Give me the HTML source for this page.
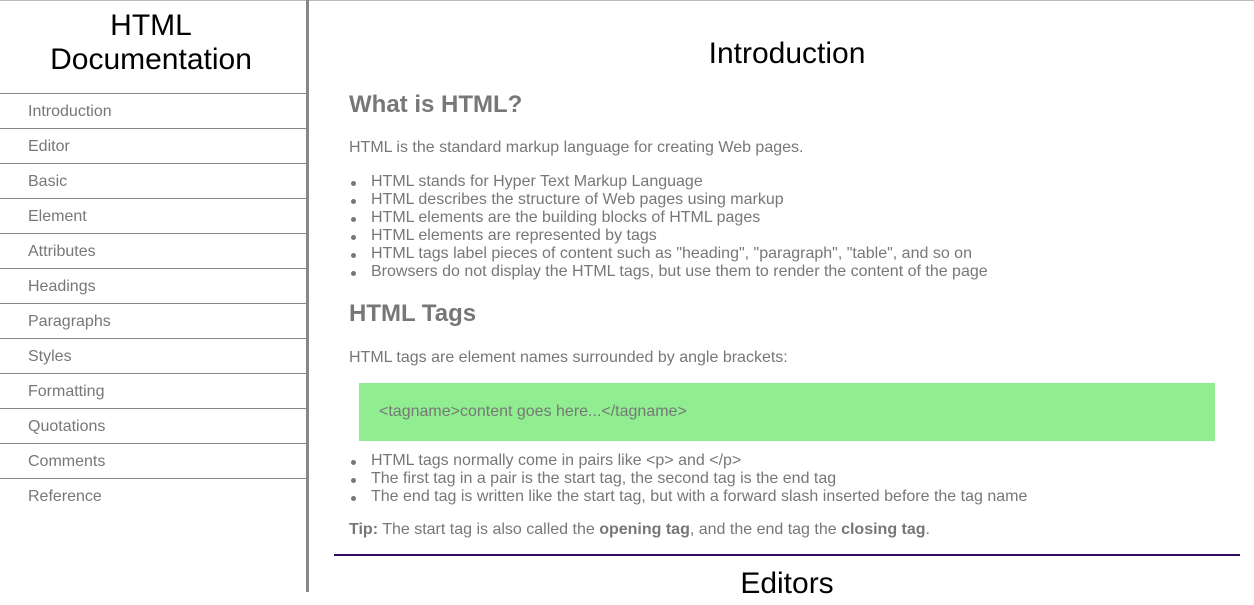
<!DOCTYPE html>
<html><head><style>
body{margin:0;width:1254px;height:605px;overflow:hidden;background:#fff;font-family:"Liberation Sans",Arial,sans-serif;position:relative}
.a{position:absolute;white-space:nowrap}
#top{position:absolute;left:0;top:0;width:1254px;height:1px;background:#bbb}
#side{position:absolute;left:0;top:0;width:306px;height:592px;border-right:3px solid #888}
#side h1{position:absolute;top:9px;left:0;width:302px;margin:0;text-align:center;font-weight:normal;font-size:30px;line-height:34px;color:#000}
.nav{position:absolute;left:0;width:306px;height:34px;border-top:1px solid #888;color:#777;font-size:16px;line-height:35px;padding-left:28px;box-sizing:border-box}
.g{color:#777;font-size:16px}
ul{margin:0;padding:0;list-style:none}
li{position:relative;padding-left:22px;line-height:18px}
li:before{content:"";position:absolute;left:2px;top:8px;width:5px;height:5px;border-radius:50%;background:#777}
</style></head><body>
<div id="top"></div>
<div id="side">
<h1>HTML<br>Documentation</h1>
<div class="nav" style="top:93px">Introduction</div>
<div class="nav" style="top:128px">Editor</div>
<div class="nav" style="top:163px">Basic</div>
<div class="nav" style="top:198px">Element</div>
<div class="nav" style="top:233px">Attributes</div>
<div class="nav" style="top:268px">Headings</div>
<div class="nav" style="top:303px">Paragraphs</div>
<div class="nav" style="top:338px">Styles</div>
<div class="nav" style="top:373px">Formatting</div>
<div class="nav" style="top:408px">Quotations</div>
<div class="nav" style="top:443px">Comments</div>
<div class="nav" style="top:478px">Reference</div>
</div>
<div class="a" style="left:334px;width:906px;top:37px;text-align:center;font-size:30px;color:#000">Introduction</div>
<div class="a" style="left:349px;top:91px;font-size:24px;font-weight:bold;color:#777">What is HTML?</div>
<div class="a g" style="left:349px;top:139px">HTML is the standard markup language for creating Web pages.</div>
<ul class="a g" style="left:349px;top:173px">
<li>HTML stands for Hyper Text Markup Language</li>
<li>HTML describes the structure of Web pages using markup</li>
<li>HTML elements are the building blocks of HTML pages</li>
<li>HTML elements are represented by tags</li>
<li>HTML tags label pieces of content such as "heading", "paragraph", "table", and so on</li>
<li>Browsers do not display the HTML tags, but use them to render the content of the page</li>
</ul>
<div class="a" style="left:349px;top:300px;font-size:24px;font-weight:bold;color:#777">HTML Tags</div>
<div class="a g" style="left:349px;top:349px">HTML tags are element names surrounded by angle brackets:</div>
<div class="a g" style="left:359px;top:383px;width:856px;height:58px;background:#90ee90;line-height:58px;padding-left:20px;box-sizing:border-box">&lt;tagname&gt;content goes here...&lt;/tagname&gt;</div>
<ul class="a g" style="left:349px;top:452px">
<li>HTML tags normally come in pairs like &lt;p&gt; and &lt;/p&gt;</li>
<li>The first tag in a pair is the start tag, the second tag is the end tag</li>
<li>The end tag is written like the start tag, but with a forward slash inserted before the tag name</li>
</ul>
<div class="a g" style="left:349px;top:521px"><b>Tip:</b> The start tag is also called the <b>opening tag</b>, and the end tag the <b>closing tag</b>.</div>
<div class="a" style="left:334px;top:554px;width:906px;height:2px;background:#2e0b5e"></div>
<div class="a" style="left:334px;width:906px;top:567px;text-align:center;font-size:30px;color:#000">Editors</div>
</body></html>
